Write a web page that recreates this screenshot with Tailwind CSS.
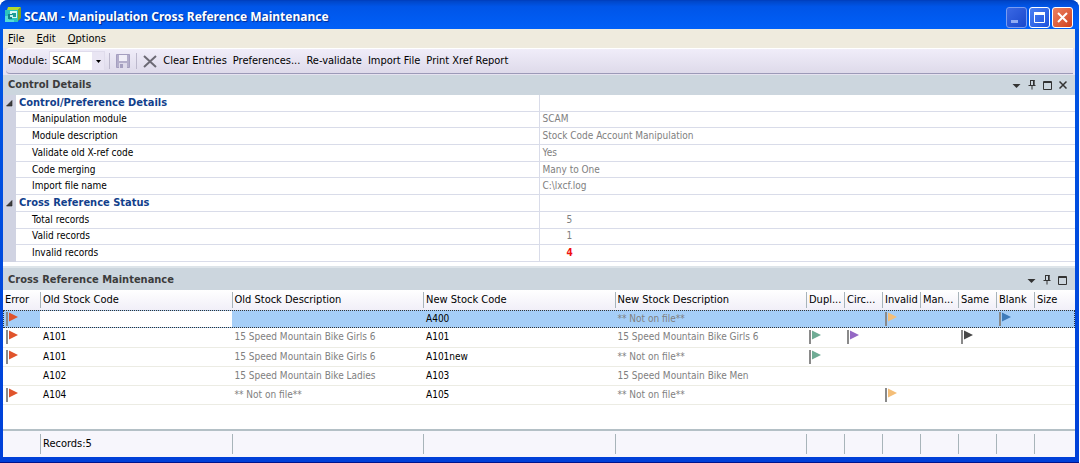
<!DOCTYPE html>
<html lang="en">
  <head>
    <meta charset="utf-8" />
    <title>SCAM - Manipulation Cross Reference Maintenance</title>
    <script src="https://cdn.jsdelivr.net/npm/@tailwindcss/browser@4"></script>
  </head>
  <body class="bg-white">
    <!-- shared icons -->
    <svg class="hidden">
      <symbol id="flag" viewBox="0 0 12 14">
        <path d="M1 0v14" stroke="#8a8a8a" stroke-width="2" />
        <path d="M3 0.5L12 5L3 9.5z" fill="currentColor" />
      </symbol>
      <symbol id="caret" viewBox="0 0 9 10">
        <path d="M0.5 4h8L4.5 8z" fill="#333" />
      </symbol>
      <symbol id="pin" viewBox="0 0 8 10">
        <path d="M2 0.5h4.5M2.5 0v5M5.5 0v5M6.2 0v5M0.5 5.5h7M4 5.5v4" fill="none" stroke="#333" />
      </symbol>
      <symbol id="box" viewBox="0 0 9 9">
        <path d="M0.5 0.5h8v8h-8zM0 1.5h9" fill="none" stroke="#333" />
      </symbol>
      <symbol id="cross" viewBox="0 0 8 8">
        <path d="M0.5 0.5l7 7M7.5 0.5l-7 7" stroke="#333" stroke-width="1.5" />
      </symbol>
      <symbol id="expander" viewBox="0 0 7 7">
        <path d="M6 0.5v5.5H0.5z" fill="#404040" stroke="#222" stroke-width="0.6" />
      </symbol>
    </svg>

    <div
      class="flex flex-col min-h-screen mr-px pl-[3px] pr-1 pb-[5px] rounded-t-lg bg-linear-to-b from-[#0058e6] to-[#0040d8] border-b border-[#00138c] font-['DejaVu_Sans_Condensed','DejaVu_Sans',sans-serif] text-[11px] leading-4 text-black"
    >
      <!-- title bar -->
      <header
        class="flex items-center h-[29px] -ml-[3px] -mr-1 pl-[5px] pr-[6px] rounded-t-lg bg-linear-to-b from-[#0046c8] via-[#0055e8] via-20% to-[#0060f8] border-t border-[#0040c0]"
      >
        <svg class="w-4 h-4 mr-[3px]" viewBox="0 0 16 16">
          <path d="M3 0h13l-3 3H2z" fill="#b4d92c" />
          <path d="M16 0v11l-3 3V3z" fill="#7fa61c" />
          <path d="M0 3h13v12H0z" fill="#2cc4bd" />
          <path d="M0 9h4v4h5v2H0z" fill="#55ded6" />
          <path d="M5 4h7v7H5z" fill="#d9f7f4" />
          <path d="M7 6h4v4H7z" fill="#1f9c94" />
          <path d="M3 7h4v5H3z" fill="#128488" />
          <path d="M5 8h3v2H5z" fill="#c4f2ee" />
        </svg>
        <h1
          class="grow pt-1 text-[12px] font-bold text-white font-['Noto_Sans',sans-serif] [text-shadow:1px_1px_1px_#002a90]"
        >
          SCAM - Manipulation Cross Reference Maintenance
        </h1>
        <div class="flex gap-[2px] pt-1">
          <button
            aria-label="Minimize"
            class="w-[21px] h-[21px] rounded-[3px] border border-[#7a9cf0] bg-linear-to-br from-[#3a68e4] to-[#1a48cc]"
          >
            <svg class="w-[19px] h-[19px]" viewBox="0 0 19 19">
              <path d="M4 13.5h7" stroke="#90acf4" stroke-width="3" />
            </svg>
          </button>
          <button
            aria-label="Maximize"
            class="w-[21px] h-[21px] rounded-[3px] border border-white bg-linear-to-br from-[#4c80f4] to-[#1c50dc]"
          >
            <svg class="w-[19px] h-[19px]" viewBox="0 0 19 19">
              <path d="M4.5 5v9.5h10V5" fill="none" stroke="#fff" />
              <path d="M4 5.5h11" stroke="#fff" stroke-width="3" />
            </svg>
          </button>
          <button
            aria-label="Close"
            class="w-[21px] h-[21px] rounded-[3px] border border-white bg-linear-to-br from-[#ec8060] to-[#d0401c]"
          >
            <svg class="w-[19px] h-[19px]" viewBox="0 0 19 19">
              <path d="M5 5l9 9M14 5l-9 9" stroke="#fff" stroke-width="2" />
            </svg>
          </button>
        </div>
      </header>

      <!-- menu -->
      <nav class="flex items-center gap-3 h-[19px] pl-[5px] bg-[#efebde]">
        <button><u>F</u>ile</button>
        <button><u>E</u>dit</button>
        <button><u>O</u>ptions</button>
      </nav>

      <!-- toolbar -->
      <div class="bg-[#e6e2f0] pl-[3px] pr-[2px] pb-px">
        <div
          class="flex items-center h-[26px] pl-[2px] border-t border-b border-t-white border-b-[#9c9ab8] rounded-l-sm bg-linear-to-b from-[#f0edf9] to-[#dedaea]"
        >
          <label for="module" class="mr-[2px]">Module:</label>
          <div class="relative mr-1">
            <select
              id="module"
              class="appearance-none w-14 h-5 pl-[2px] bg-white border border-[#e0dcec] outline-none"
            >
              <option>SCAM</option>
            </select>
            <div
              class="absolute right-px top-px w-3 h-[18px] flex items-center justify-center bg-[#e9e5f3] pointer-events-none"
            >
              <svg class="w-[5px] h-[3px]" viewBox="0 0 5 3"><path d="M0 0h5L2.5 3z" /></svg>
            </div>
          </div>
          <div class="w-px h-4 bg-[#bcb8cc] mr-[6px]"></div>
          <button aria-label="Save" disabled class="mr-[6px]">
            <svg class="w-[14px] h-[14px]" viewBox="0 0 14 14">
              <path d="M0.5 0.5h13v13h-13z" fill="#b4aecb" stroke="#a59fc0" />
              <path d="M3 1h8v6H3z" fill="#f1eff8" />
              <path d="M3 9h8v5H3z" fill="#dedaea" />
              <path d="M4 10h3v4H4z" fill="#a59fc0" />
            </svg>
          </button>
          <div class="w-px h-4 bg-[#bcb8cc] mr-[6px]"></div>
          <button aria-label="Delete" class="mr-[6px]">
            <svg class="w-[14px] h-[13px]" viewBox="0 0 14 13">
              <path d="M1 1l12 11M13 1L1 12" stroke="#6c6a74" stroke-width="2" />
            </svg>
          </button>
          <div class="flex gap-[6px]">
            <button>Clear Entries</button>
            <button>Preferences...</button>
            <button>Re-validate</button>
            <button>Import File</button>
            <button>Print Xref Report</button>
          </div>
        </div>
      </div>

      <!-- control details -->
      <section class="bg-white pb-1">
        <div class="flex items-center h-5 pl-[5px] pr-2 bg-[#ccd6de]">
          <h2 class="grow font-bold text-[#3c3c3c]">Control Details</h2>
          <div class="flex items-center gap-[7px]">
            <button aria-label="Menu"><svg class="w-[9px] h-[10px]"><use href="#caret" /></svg></button>
            <button aria-label="Pin"><svg class="w-2 h-[10px]"><use href="#pin" /></svg></button>
            <button aria-label="Maximize panel"><svg class="w-[9px] h-[9px]"><use href="#box" /></svg></button>
            <button aria-label="Close panel"><svg class="w-2 h-2"><use href="#cross" /></svg></button>
          </div>
        </div>
        <table id="details" class="w-full h-[167px] table-fixed border-collapse leading-[14px]">
          <colgroup>
            <col class="w-[13px]" />
            <col />
            <col class="w-1/2" />
          </colgroup>
          <tbody></tbody>
        </table>
      </section>

      <!-- cross reference maintenance -->
      <section class="grow flex flex-col bg-white">
        <div class="flex items-center h-6 pl-[5px] pr-2 pt-[2px] border-t-2 border-[#dde4e9] bg-[#ccd6de]">
          <h2 class="grow font-bold text-[#3c3c3c]">Cross Reference Maintenance</h2>
          <div class="flex items-center gap-[7px]">
            <button aria-label="Menu"><svg class="w-[9px] h-[10px]"><use href="#caret" /></svg></button>
            <button aria-label="Pin"><svg class="w-2 h-[10px]"><use href="#pin" /></svg></button>
            <button aria-label="Maximize panel"><svg class="w-[9px] h-[9px]"><use href="#box" /></svg></button>
          </div>
        </div>
        <table id="xref" class="w-full grow table-fixed border-collapse">
          <colgroup>
            <col class="w-[37px]" />
            <col />
            <col />
            <col />
            <col />
            <col class="w-[38px]" />
            <col class="w-[38px]" />
            <col class="w-[38px]" />
            <col class="w-[38px]" />
            <col class="w-[38px]" />
            <col class="w-[38px]" />
            <col class="w-[41px]" />
          </colgroup>
          <thead>
            <tr class="h-[20px] bg-linear-to-b from-white to-[#f1eff8]"></tr>
          </thead>
          <tbody class="text-[10px]"></tbody>
          <tfoot>
            <tr class="h-[27px] border-t-2 border-[#b4c0c6] bg-[#f7f6fc]"></tr>
          </tfoot>
        </table>
      </section>
    </div>

    <script>
      const details = [
        ["Control/Preference Details"],
        ["Manipulation module", "SCAM"],
        ["Module description", "Stock Code Account Manipulation"],
        ["Validate old X-ref code", "Yes"],
        ["Code merging", "Many to One"],
        ["Import file name", "C:\\lxcf.log"],
        ["Cross Reference Status"],
        ["Total records", 5],
        ["Valid records", 1],
        ["Invalid records", 4],
      ];

      const columns = [
        "Error", "Old Stock Code", "Old Stock Description", "New Stock Code",
        "New Stock Description", "Dupl...", "Circ...", "Invalid", "Man...",
        "Same", "Blank", "Size",
      ];

      const notOnFile = "** Not on file**";
      const girls = "15 Speed Mountain Bike Girls 6";
      const records = [
        { cells: ["", "", "A400", notOnFile], flags: ["Error", "Invalid", "Blank"] },
        { cells: ["A101", girls, "A101", girls], flags: ["Error", "Dupl...", "Circ...", "Same"] },
        { cells: ["A101", girls, "A101new", notOnFile], flags: ["Error", "Dupl..."] },
        { cells: ["A102", "15 Speed Mountain Bike Ladies", "A103", "15 Speed Mountain Bike Men"], flags: [] },
        { cells: ["A104", notOnFile, "A105", notOnFile], flags: ["Error", "Invalid"] },
      ];

      const flagColors = {
        Error: "text-[#e0542c]",
        "Dupl...": "text-[#6fab94]",
        "Circ...": "text-[#9468c4]",
        Invalid: "text-[#f4be78]",
        Same: "text-[#484848]",
        Blank: "text-[#3f7cba]",
      };

      document.querySelector("#details tbody").innerHTML = details
        .map(([name, value]) => {
          if (value === undefined) {
            return `<tr>
              <td class="p-0 bg-[#d0d3e2]"><svg class="w-[7px] h-[7px] mx-auto"><use href="#expander" /></svg></td>
              <th class="p-0 pl-[3px] text-left font-bold text-[#123f8c] border-r border-b border-[#d9dce9]">${name}</th>
              <td class="p-0 border-b border-[#d9dce9]"></td></tr>`;
          }
          const indent = typeof value === "number" ? "pl-[27px]" : "pl-[3px]";
          const style = name === "Invalid records" ? "font-bold text-[#f01010]" : "text-[#808080]";
          return `<tr class="text-[10px]">
            <td class="p-0 bg-[#d0d3e2]"></td>
            <th class="p-0 pl-4 text-left font-normal border-r border-b border-[#d9dce9]">${name}</th>
            <td class="py-0 ${indent} ${style} border-b border-[#d9dce9]">${value}</td></tr>`;
        })
        .join("");

      document.querySelector("#xref thead tr").innerHTML = columns
        .map((c, i) => {
          const divider = i ? "border-l border-[#a8b4ba] pl-[2px]" : "pl-[2px]";
          return `<th class="p-0 text-left font-normal"><div class="${divider} h-4 whitespace-nowrap">${c}</div></th>`;
        })
        .join("");

      const flagCell = (column, record) =>
        `<td class="p-0 pl-[3px] align-top">${
          record.flags.includes(column)
            ? `<svg class="w-3 h-[14px] mt-[2px] ${flagColors[column]}"><use href="#flag" /></svg>`
            : ""
        }</td>`;

      document.querySelector("#xref tbody").innerHTML =
        records
          .map((record, i) => {
            const selected = i === 0;
            const cells = record.cells
              .map((text, j) => {
                if (selected && j === 0) {
                  return `<td class="p-0"><input aria-label="Old Stock Code" class="block w-full h-[16px] bg-white outline-none" /></td>`;
                }
                return `<td class="p-0 pl-[3px] ${j % 2 ? "text-[#808080]" : ""}">${text}</td>`;
              })
              .join("");
            const row = selected
              ? "h-[18px] bg-[#a5cef7] outline-1 outline-dotted outline-[#333] -outline-offset-1"
              : "h-[19px] border-b border-[#ecece4]";
            return `<tr class="${row}">${flagCell("Error", record)}${cells}${columns
              .slice(5)
              .map((c) => flagCell(c, record))
              .join("")}</tr>`;
          })
          .join("") + `<tr><td colspan="12"></td></tr>`;

      document.querySelector("#xref tfoot tr").innerHTML = columns
        .map((c, i) => {
          const divider = i ? "border-l border-[#a8b4ba] pl-[2px]" : "";
          return `<td class="p-0"><div class="${divider} h-5 leading-5">${i === 1 ? "Records:" + records.length : ""}</div></td>`;
        })
        .join("");
    </script>
  </body>
</html>
